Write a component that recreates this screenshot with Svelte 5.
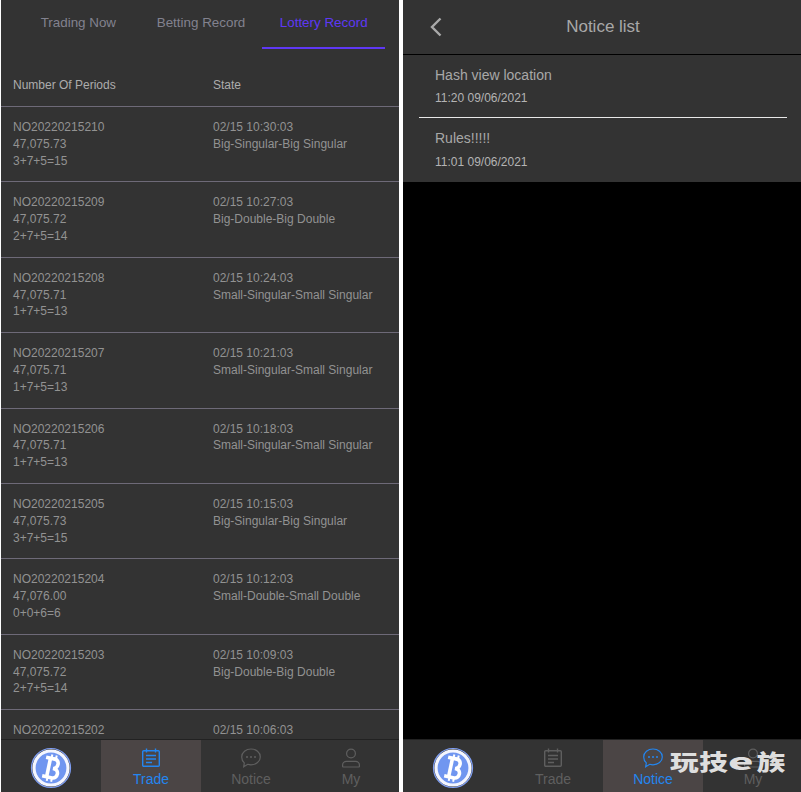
<script>
  let tabs = ['Trading Now', 'Betting Record', 'Lottery Record'];

  // the last row runs under the bottom nav, only its first line shows
  let records = [
    { no: 'NO20220215210', price: '47,075.73', sum: '3+7+5=15', time: '02/15 10:30:03', state: 'Big-Singular-Big Singular' },
    { no: 'NO20220215209', price: '47,075.72', sum: '2+7+5=14', time: '02/15 10:27:03', state: 'Big-Double-Big Double' },
    { no: 'NO20220215208', price: '47,075.71', sum: '1+7+5=13', time: '02/15 10:24:03', state: 'Small-Singular-Small Singular' },
    { no: 'NO20220215207', price: '47,075.71', sum: '1+7+5=13', time: '02/15 10:21:03', state: 'Small-Singular-Small Singular' },
    { no: 'NO20220215206', price: '47,075.71', sum: '1+7+5=13', time: '02/15 10:18:03', state: 'Small-Singular-Small Singular' },
    { no: 'NO20220215205', price: '47,075.73', sum: '3+7+5=15', time: '02/15 10:15:03', state: 'Big-Singular-Big Singular' },
    { no: 'NO20220215204', price: '47,076.00', sum: '0+0+6=6', time: '02/15 10:12:03', state: 'Small-Double-Small Double' },
    { no: 'NO20220215203', price: '47,075.72', sum: '2+7+5=14', time: '02/15 10:09:03', state: 'Big-Double-Big Double' },
    { no: 'NO20220215202', time: '02/15 10:06:03' }
  ];

  let notices = [
    { title: 'Hash view location', time: '11:20 09/06/2021' },
    { title: 'Rules!!!!!', time: '11:01 09/06/2021' }
  ];
</script>

{#snippet coin()}
  <div class="nav-logo">
    <svg width="42" height="42" viewBox="0 0 42 42">
      <circle cx="21" cy="21" r="19.500" fill="none" stroke="#7f9ff5" stroke-width="1.200" />
      <circle cx="21" cy="21" r="17" fill="#7096f0" stroke="#f4f6ff" stroke-width="3.200" />
      <g transform="rotate(12 21 21)" fill="none" stroke="#fff" stroke-width="3.600">
        <path d="M14 11.500h9c5.500 0 5.500 9 0 9.500h1c6 0 6 9.500 0 9.500H14" />
        <path d="M18.500 11.500v19" />
      </g>
      <path d="M19.500 7.500v4M24 7.500v4M19.500 30.500v4M24 30.500v4" stroke="#fff" stroke-width="2" transform="rotate(12 21 21)" />
    </svg>
  </div>
{/snippet}

{#snippet nav(active)}
  <nav class="nav">
    {@render coin()}
    <div class="nav-item" class:active={active === 'Trade'}>
      <svg width="20" height="20" viewBox="0 0 20 20" fill="none" stroke="currentColor" stroke-width="1.400">
        <rect x="1.700" y="2.700" width="16.600" height="15.600" rx="1" />
        <path d="M5.500 0.500v4M14.500 0.500v4M5 7.500h10M5 11h10M5 14.500h6" />
      </svg>
      <span>Trade</span>
    </div>
    <div class="nav-item" class:active={active === 'Notice'}>
      <svg width="20" height="20" viewBox="0 0 20 20" fill="none" stroke="currentColor" stroke-width="1.200">
        <path d="M10 1c5 0 9.300 3.300 9.300 7.900s-4.300 7.900-9.300 7.900c-1.200 0-2.300-.2-3.300-.5L2.700 18.700l.6-3.800C1.700 13.400.7 11.300.7 8.900.7 4.300 5 1 10 1z" />
        <circle cx="6" cy="9" r="1" fill="currentColor" stroke="none" />
        <circle cx="10" cy="9" r="1" fill="currentColor" stroke="none" />
        <circle cx="14" cy="9" r="1" fill="currentColor" stroke="none" />
      </svg>
      <span>Notice</span>
    </div>
    <div class="nav-item" class:active={active === 'My'}>
      <svg width="20" height="20" viewBox="0 0 20 20" fill="none" stroke="currentColor" stroke-width="1.200">
        <circle cx="10" cy="5.500" r="4.400" />
        <path d="M1.600 18.500v-1.500c0-2 1.700-3.600 3.800-3.600h9.200c2.100 0 3.800 1.600 3.800 3.600v1.500c0 .3-.2.500-.5.500H2.100c-.3 0-.5-.2-.5-.5z" />
      </svg>
      <span>My</span>
    </div>
  </nav>
{/snippet}

<main class="page">
  <section class="phone left">
    <div class="tabs">
      {#each tabs as tab, i}
        <div class="tab" class:on={i === 2}>{tab}</div>
      {/each}
    </div>
    <div class="table">
      <div class="row head">
        <div>Number Of Periods</div>
        <div>State</div>
      </div>
      {#each records as r}
        <div class="row record">
          <div>
            <p>{r.no}</p>
            {#if r.price}
              <p>{r.price}</p>
              <p>{r.sum}</p>
            {/if}
          </div>
          <div>
            <p>{r.time}</p>
            {#if r.state}
              <p>{r.state}</p>
            {/if}
          </div>
        </div>
      {/each}
    </div>
    {@render nav('Trade')}
  </section>

  <section class="phone right">
    <header class="title">
      <svg class="back" width="14" height="20" viewBox="0 0 14 20" fill="none" stroke="#aaa" stroke-width="2.400">
        <path d="M11.500 1.500L3 10l8.500 8.500" />
      </svg>
      <h1>Notice list</h1>
    </header>
    <div class="notices">
      {#each notices as n, i}
        <div class="notice" class:first={i === 0}>
          <div class="notice-title">{n.title}</div>
          <div class="notice-time">{n.time}</div>
        </div>
      {/each}
    </div>
    <div class="blank"></div>
    {@render nav('Notice')}
    <div class="mark">玩技<span>e</span>族</div>
  </section>
</main>

<style>
  :global(body) {
    background: #fff;
    font-family: "Liberation Sans", Arial, sans-serif;
  }

  .page {
    display: flex;
    width: 801px;
    height: 792px;
    overflow: hidden;
    gap: 4px;
    box-sizing: border-box;
    padding-left: 1px;
  }

  .phone {
    position: relative;
    display: flex;
    flex-direction: column;
    height: 792px;
    background: #333;
    overflow: hidden;
  }

  .left {
    width: 398px;
  }

  .right {
    width: 398px;
    background: #000;
  }

  .tabs {
    display: flex;
    height: 50px;
    flex: none;
    padding: 0 14px 0 16px;
  }

  .tab {
    flex: 1;
    text-align: center;
    font-size: 13.400px;
    color: #82828f;
    line-height: 45px;
    height: 49px;
    box-sizing: border-box;
  }

  .on {
    color: #5f38f5;
    border-bottom: 2px solid #5f38f5;
  }

  .table {
    flex: 1;
    min-height: 0;
    overflow: hidden;
    padding-top: 7px;
    color: #929292;
    font-size: 12px;
  }

  .row {
    display: grid;
    grid-template-columns: 200px 1fr;
    padding-left: 12px;
    border-bottom: 1px solid #6e6a78;
  }

  .head {
    height: 49px;
    line-height: 56px;
    color: #adadad;
  }

  .record {
    height: 74.400px;
  }

  .record p {
    margin: 0;
    line-height: 16.800px;
  }

  .record > div {
    padding-top: 12px;
  }

  .nav {
    display: grid;
    grid-template-columns: repeat(4, 100px);
    height: 52px;
    flex: none;
    background: #333;
    border-top: 1px solid #222;
  }

  .nav-logo {
    display: flex;
    align-items: center;
    justify-content: center;
    padding-top: 3px;
  }

  .nav-item {
    display: flex;
    flex-direction: column;
    align-items: center;
    color: #5f5f5f;
    font-size: 14px;
    padding-top: 8px;
    line-height: 18px;
  }

  .nav-item span {
    margin-top: 2px;
  }

  .active {
    background: #4b4545;
    color: #2386f0;
  }

  .title {
    position: relative;
    display: flex;
    align-items: center;
    justify-content: center;
    height: 54px;
    flex: none;
    background: #333;
    border-bottom: 1px solid #000;
  }

  .title h1 {
    margin: 0;
    padding-left: 2px;
    font-size: 17px;
    font-weight: normal;
    color: #a8a8a8;
  }

  .back {
    position: absolute;
    left: 26px;
    top: 17px;
  }

  .notices {
    background: #333;
    flex: none;
    padding: 0 14px 1px 16px;
  }

  .notice {
    padding: 11px 0 0 16px;
    height: 63px;
    box-sizing: border-box;
  }

  .notice-title {
    font-size: 14px;
    line-height: 18px;
    color: #a8a8a8;
  }

  .notice-time {
    font-size: 12px;
    line-height: 16px;
    margin-top: 6px;
    color: #b4b4b4;
  }

  .first {
    border-bottom: 1px solid #e8e8e8;
  }

  .first + .notice .notice-time {
    margin-top: 7px;
  }

  .blank {
    flex: 1;
  }

  .mark {
    position: absolute;
    left: 267px;
    bottom: 20px;
    font: 900 22px/24px "Noto Sans CJK SC", sans-serif;
    color: #dedede;
    white-space: nowrap;
    transform: scaleX(1.300);
    transform-origin: left center;
    letter-spacing: 0.500px;
  }

  .mark span {
    display: inline-block;
    margin: 0 5px 0 3px;
    transform: scaleX(1.500);
  }
</style>
